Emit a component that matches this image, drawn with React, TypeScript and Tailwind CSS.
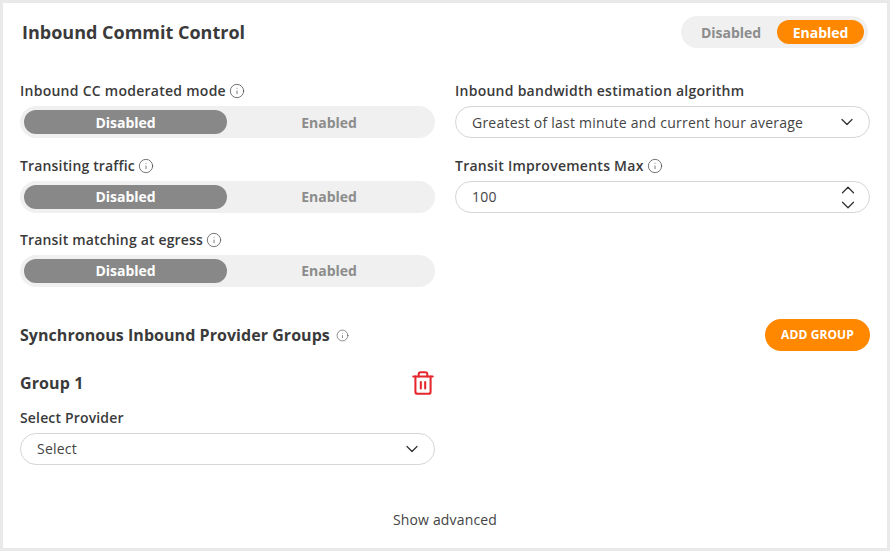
import { ChevronDown, ChevronUp, Info, Trash2 } from "lucide-react";

function InfoIcon({ size = 16 }: { size?: number }) {
  return <Info aria-hidden size={size} strokeWidth={1.1} className="text-[#444]" />;
}

function FieldLabel({ text, info, tight }: { text: string; info?: boolean; tight?: boolean }) {
  return (
    <div
      className={
        tight
          ? "flex h-[20px] items-center gap-[3px] text-[14px] font-semibold leading-[20px] tracking-[0.16px] text-[#3a3a3a]"
          : "flex h-[20px] items-center gap-[3px] text-[14px] font-semibold leading-[20px] tracking-[0.26px] text-[#3a3a3a]"
      }
    >
      {text}
      {info && <InfoIcon />}
    </div>
  );
}

function WideToggle({ lift }: { lift?: boolean }) {
  return (
    <div className="mt-[5px] flex h-[32px] items-center rounded-full bg-[#f0f0f0] p-[4px] text-[14px] font-bold tracking-[-0.05px]">
      <div className="flex h-[24px] w-[203px] items-center justify-center rounded-full bg-[#888888] text-white">
        <span className={lift ? "pb-[2px]" : ""}>Disabled</span>
      </div>
      <div className={lift ? "flex-1 pb-[2px] text-center text-[#8c8c8c]" : "flex-1 text-center text-[#8c8c8c]"}>
        Enabled
      </div>
    </div>
  );
}

function SelectBox({ value, low }: { value: string; low?: boolean }) {
  return (
    <div className="mt-[5px] flex h-[32px] items-center justify-between rounded-full border border-[#d6d6d6] bg-white pl-[16px] pr-[12px] text-[14px] tracking-[0.23px] text-[#444]">
      <span className={low ? "" : "pb-[2px]"}>{value}</span>
      <ChevronDown aria-hidden size={20} strokeWidth={1.5} className="text-[#333]" />
    </div>
  );
}

export default function App() {
  return (
    <div className="h-[551px] w-[890px] bg-[#e9e9e9] p-[3px] font-['Open_Sans',sans-serif]">
      <div className="flex h-[545px] flex-col bg-white px-[17px]">
        <header className="flex h-[58px] items-center justify-between pl-[2px] pr-[2px]">
          <h1 className="text-[18px] font-bold text-[#3a3a3a]">Inbound Commit Control</h1>
          <div className="flex h-[32px] items-center rounded-full bg-[#f0f0f0] p-[4px] text-[14px] font-bold tracking-[-0.05px]">
            <div className="w-[92px] text-center text-[#8c8c8c]">Disabled</div>
            <div className="flex h-[24px] w-[87px] items-center justify-center rounded-full bg-[#ff8800] text-white">
              Enabled
            </div>
          </div>
        </header>

        <div className="mt-[20px] grid grid-cols-2 gap-x-[20px]">
          <div className="flex flex-col">
            <FieldLabel text="Inbound CC moderated mode" info />
            <WideToggle />
            <div className="mt-[18px]">
              <FieldLabel text="Transiting traffic" info tight />
            </div>
            <WideToggle lift />
            <div className="mt-[17px]">
              <FieldLabel text="Transit matching at egress" info tight />
            </div>
            <WideToggle lift />
          </div>
          <div className="flex flex-col">
            <FieldLabel text="Inbound bandwidth estimation algorithm" />
            <SelectBox value="Greatest of last minute and current hour average" low />
            <div className="mt-[18px]">
              <FieldLabel text="Transit Improvements Max" info />
            </div>
            <div className="mt-[5px] flex h-[32px] items-center justify-between rounded-full border border-[#d6d6d6] bg-white pl-[16px] pr-[10px] text-[14px] tracking-[0.23px] text-[#444]">
              <span className="pb-[2px]">100</span>
              <div className="flex flex-col items-center text-[#333]">
                <ChevronUp aria-hidden size={22} strokeWidth={1.4} className="-mb-[4px]" />
                <ChevronDown aria-hidden size={22} strokeWidth={1.4} className="-mt-[3px]" />
              </div>
            </div>
          </div>
        </div>

        <div className="mt-[32px] flex h-[32px] items-center justify-between">
          <div className="flex items-center gap-[6px] text-[16px] font-bold tracking-[0.05px] text-[#3a3a3a]">
            Synchronous Inbound Provider Groups
            <InfoIcon size={13} />
          </div>
          <button
            type="button"
            className="flex h-[32px] w-[105px] items-center justify-center rounded-full bg-[#ff8800] text-[12px] font-bold tracking-[0.1px] text-white"
          >
            ADD GROUP
          </button>
        </div>

        <div className="mt-[18px] w-[415px]">
          <div className="flex h-[28px] items-center justify-between">
            <span className="text-[16px] font-bold tracking-[0.1px] text-[#3a3a3a]">Group 1</span>
            <Trash2 aria-hidden size={26} strokeWidth={1.9} className="-mr-[1px] text-[#e5272d]" />
          </div>
          <div className="mt-[11px]">
            <FieldLabel text="Select Provider" tight />
          </div>
          <div className="mt-[1px]">
            <SelectBox value="Select" />
          </div>
        </div>

        <div className="mt-[45px] text-center text-[14px] leading-[20px] tracking-[0.17px] text-[#444]">Show advanced</div>
      </div>
    </div>
  );
}
